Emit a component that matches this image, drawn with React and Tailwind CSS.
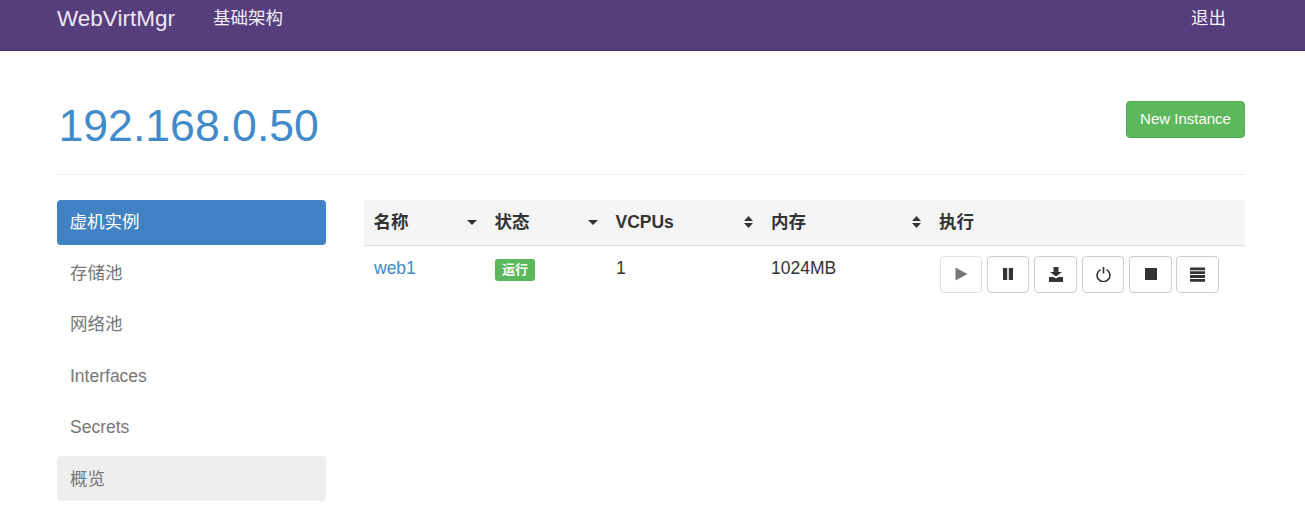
import React from 'react';

const FONT = "font-['Liberation_Sans','Noto_Sans_CJK_SC',sans-serif]";

const PlayIcon = () => (
  <svg width="13" height="14" viewBox="0 0 13 14" fill="currentColor"><path d="M0.500 0.500v13L12.500 7z" /></svg>
);
const PauseIcon = () => (
  <svg width="10" height="12" viewBox="0 0 10 12" fill="currentColor"><path d="M0 0h4.200v12H0zM5.800 0h4.200v12H5.800z" /></svg>
);
const SaveIcon = () => (
  <svg width="14" height="15" viewBox="0 0 14 15" fill="currentColor">
    <path d="M4.500 0h5v5H13L7 9.500 1 5h3.500z" />
    <path d="M0 10h4.500L7 11.500 9.500 10H14v5H0z" />
  </svg>
);
const PowerIcon = () => (
  <svg width="15" height="15" viewBox="0 0 15 15" fill="none" stroke="currentColor" strokeWidth="1.600">
    <path d="M4.600 2.600a6.400 6.400 0 1 0 5.800 0" />
    <path d="M7.500 0v6.500" />
  </svg>
);
const StopIcon = () => (
  <svg width="12" height="12" viewBox="0 0 12 12" fill="currentColor"><path d="M0 0h12v12H0z" /></svg>
);
const MenuIcon = () => (
  <svg width="15" height="15" viewBox="0 0 15 15" fill="currentColor">
    <path d="M0 0.500h15v2.800H0zM0 4.300h15v2.800H0zM0 8.100h15v2.800H0zM0 11.900h15v2.800H0z" />
  </svg>
);

const SortDown = () => (
  <svg width="10" height="5" viewBox="0 0 10 5" fill="currentColor"><path d="M0 0h10L5 5z" /></svg>
);
const SortBoth = () => (
  <svg width="9" height="12" viewBox="0 0 9 12" fill="currentColor"><path d="M0 5h9L4.500 0zM0 7h9l-4.500 5z" /></svg>
);

const sideItems = [
  { label: '存储池', nudge: 'pb-[2px]' },
  { label: '网络池', nudge: 'pb-[2px]' },
  { label: 'Interfaces', nudge: '' },
  { label: 'Secrets', nudge: '' },
];

function ActionButton({ width, disabled, children }) {
  return (
    <button
      className={`flex h-[37px] items-center justify-center rounded-[4px] border bg-white ${width} ${
        disabled ? 'border-[#e0e0e0] text-[#777777]' : 'border-[#cccccc] text-[#333333]'
      }`}
    >
      {children}
    </button>
  );
}

export default function App() {
  return (
    <div className={`min-h-[531px] bg-white text-[17.5px] text-[#333333] ${FONT}`}>
      <nav className="flex h-[51px] items-start justify-between border-b border-[#4b3371] bg-[#563d7c] pl-[57px] pr-[79px]">
        <div className="flex items-start">
          <a className="mt-[5px] text-[22.500px] leading-[28px] text-[#eee7f7]">WebVirtMgr</a>
          <a className="ml-[38px] mt-[5px] leading-[26px] text-[#f4f0fa]">基础架构</a>
        </div>
        <a className="mt-[5px] leading-[26px] text-[#f4f0fa]">退出</a>
      </nav>

      <div className="px-[60px] pl-[57px]">
        <header className="flex items-start justify-between border-b border-[#eeeeee] pb-[23px] pt-[50px]">
          <h1 className="ml-[1.500px] text-[44.600px] leading-[50px] text-[#428bca]">192.168.0.50</h1>
          <button className="h-[37px] w-[119px] rounded-[4px] border border-[#4cae4c] bg-[#5cb85c] text-[15px] text-white">
            New Instance
          </button>
        </header>

        <div className="mt-[25px] flex items-start">
          <aside className="flex w-[269px] flex-col gap-[6.200px]">
            <a className="flex h-[45px] items-center rounded-[4px] bg-[#4182c4] px-[12.500px] text-white">虚机实例</a>
            {sideItems.map((item) => (
              <a key={item.label} className={`flex h-[45px] items-center px-[13px] text-[#777777] ${item.nudge}`}>
                {item.label}
              </a>
            ))}
            <a className="flex h-[45px] items-center rounded-[4px] bg-[#eeeeee] px-[13px] pt-[2px] text-[#777777]">概览</a>
          </aside>

          <main className="ml-[38px] flex-1">
            <table className="w-full table-fixed border-collapse">
              <thead>
                <tr className="h-[45px] border-b border-[#dddddd] bg-[#f5f5f5] text-left font-bold">
                  <th className="w-[121px] pl-[9.500px]">
                    <div className="flex items-center justify-between pr-[8px]">名称<SortDown /></div>
                  </th>
                  <th className="w-[121px] pl-[9.500px]">
                    <div className="flex items-center justify-between pr-[8px]">状态<SortDown /></div>
                  </th>
                  <th className="w-[155px] pl-[9.500px]">
                    <div className="flex items-center justify-between pr-[8.500px]">VCPUs<SortBoth /></div>
                  </th>
                  <th className="w-[169px] pl-[10px]">
                    <div className="flex items-center justify-between pr-[9px]">内存<SortBoth /></div>
                  </th>
                  <th className="pl-[9px]">执行</th>
                </tr>
              </thead>
              <tbody>
                <tr className="align-top">
                  <td className="pl-[10px] pt-[10px] leading-[25px] text-[#428bca]">web1</td>
                  <td className="pl-[10px] pt-[13px]">
                    <span className="flex h-[22px] w-[40px] items-center justify-center rounded-[3px] bg-[#5cb85c] text-[13px] font-bold text-white">
                      运行
                    </span>
                  </td>
                  <td className="pl-[10px] pt-[10px] leading-[25px]">1</td>
                  <td className="pl-[10px] pt-[10px] leading-[25px]">1024MB</td>
                  <td className="pl-[10px] pt-[10px]">
                    <div className="flex gap-[5px]">
                      <ActionButton width="w-[42px]" disabled><PlayIcon /></ActionButton>
                      <ActionButton width="w-[42px]"><PauseIcon /></ActionButton>
                      <ActionButton width="w-[43px]"><SaveIcon /></ActionButton>
                      <ActionButton width="w-[42px]"><PowerIcon /></ActionButton>
                      <ActionButton width="w-[43px]"><StopIcon /></ActionButton>
                      <ActionButton width="w-[43px] -ml-[1px]"><MenuIcon /></ActionButton>
                    </div>
                  </td>
                </tr>
              </tbody>
            </table>
          </main>
        </div>
      </div>
    </div>
  );
}
